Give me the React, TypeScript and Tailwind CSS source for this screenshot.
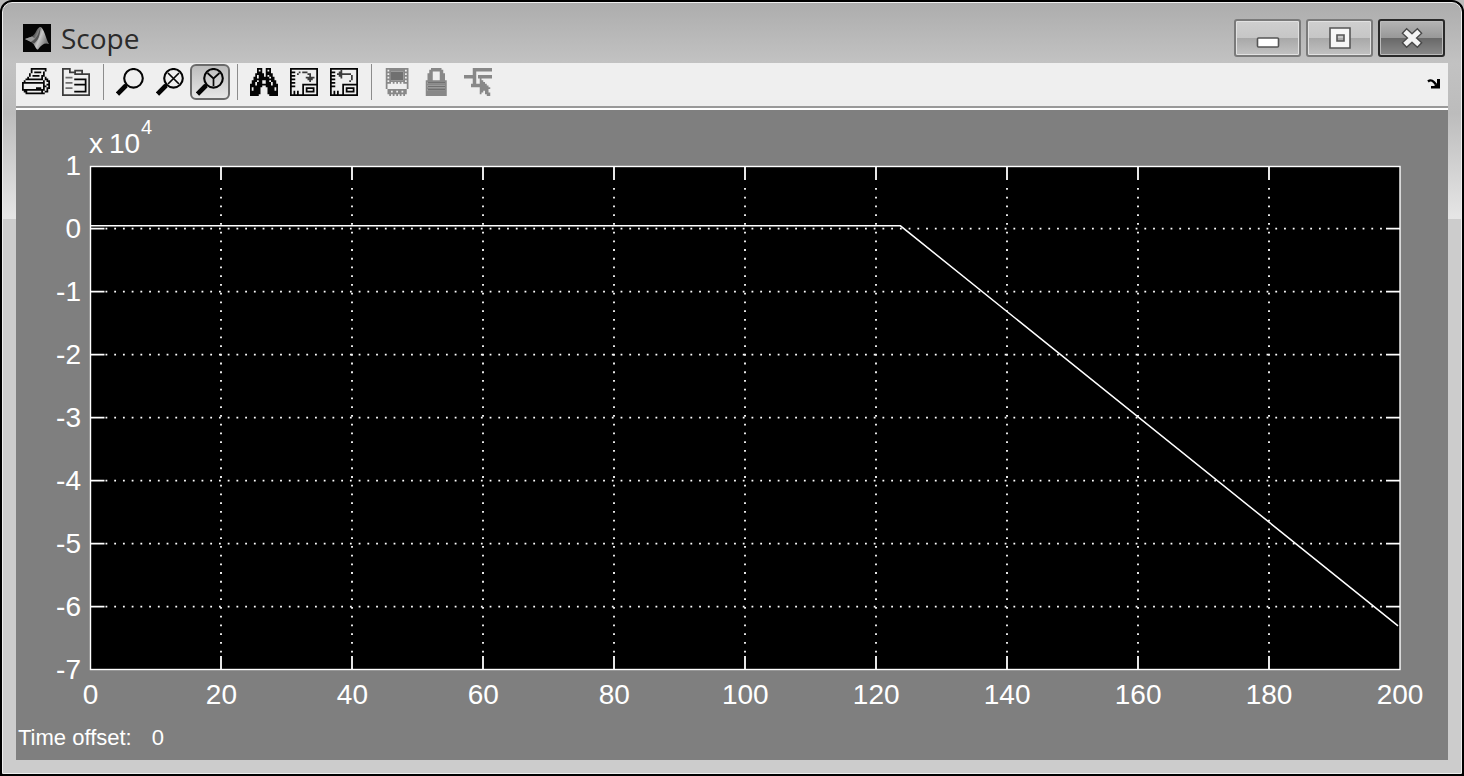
import React from "react";

type Bitmap = string[];

const PRINTER: Bitmap = [
  ".....#########..",
  ".....#.......#..",
  ".....#.####.#...",
  "....#.......#...",
  "....#.####.##...",
  "...#.......#.#..",
  "..##########.##.",
  ".#..........#.##",
  "#############..#",
  "#...........#.##",
  "#...........##.#",
  "#.......###.#.##",
  "#############.#.",
  ".##........#.##.",
  "..###########...",
  "................",
];

const PARAMETERS: Bitmap = [
  "=====...........",
  "=...=..=====....",
  "=...====...=....",
  "=......=========",
  "=..............=",
  "=.++++.........=",
  "=......#######.=",
  "=............#.=",
  "=.++++.......#.=",
  "=......#######.=",
  "=............#.=",
  "=.++++.......#.=",
  "=............#.=",
  "=......#######.=",
  "=..............=",
  "================",
];

const BINOCULARS: Bitmap = [
  "....###..###....",
  "....#.#..#.#....",
  "....###..###....",
  "...#####.####...",
  "...#.###.#.##...",
  "..##.######.##..",
  "..############..",
  ".###.##..##.###.",
  ".##.###..###.##.",
  "###.########.###",
  "#######..#######",
  "#.####....####.#",
  "#.####....####.#",
  "######....######",
  "######....######",
  "#####......#####",
];

const SAVE_AXES: Bitmap = [
  "################",
  "#..............#",
  "###..=.===.....#",
  "#...=.....==...#",
  "###........=...#",
  "#........=====.#",
  "###.......===..#",
  "#..........=...#",
  "###............#",
  "#......#########",
  "###....#.......#",
  "#......#.#####.#",
  "#......#.#...#.#",
  "#.#.#..#.#####.#",
  "#.#.#..#.......#",
  "################",
];

const RESTORE_AXES: Bitmap = [
  "################",
  "#.....=........#",
  "###..==........#",
  "#...========...#",
  "###..==.....=..#",
  "#.....=.....=..#",
  "###.........=..#",
  "#..........=...#",
  "###............#",
  "#......#########",
  "###....#.......#",
  "#......#.#####.#",
  "#......#.#...#.#",
  "#.#.#..#.#####.#",
  "#.#.#..#.......#",
  "################",
];

const FLOATING: Bitmap = [
  ".-------------..",
  ".-.---------.-..",
  ".---+++++++---..",
  ".-.-+++++++-.-..",
  ".---+++++++---..",
  ".-.-+++++++-.-..",
  ".---+++++++---..",
  ".-.---------.-..",
  ".---.-.-.-.---..",
  ".-...........-..",
  ".-...........-..",
  ".-...........-..",
  "..-----------...",
  "..--.--.--.--...",
  "..-----------...",
  "...-.-.-.-.-....",
];

const LOCK: Bitmap = [
  "....------......",
  "...--------.....",
  "...--....--.....",
  "..---....---....",
  "..---....---....",
  "..---....---....",
  "..---....---....",
  ".------------...",
  ".-++++++++++-...",
  ".------------...",
  ".-++++++++++-...",
  ".------------...",
  ".-++++++++++-...",
  ".------------...",
  ".------------...",
  ".------------...",
];

const SELECTOR: Bitmap = [
  ".....-----------",
  ".....-----------",
  ".....--.........",
  ".....--.........",
  "-------.--------",
  "-------.--------",
  ".....--..-......",
  ".....--..--.....",
  ".....--..---....",
  "....---------...",
  "....----------..",
  ".........------.",
  ".........-----..",
  ".........--.--..",
  ".........-..---.",
  ".............--.",
];

const INKS: Record<string, string> = {
  "#": "#050505",
  "=": "#3c3c3c",
  "+": "#707070",
  "-": "#888888",
};

function tracePath(rows: Bitmap, ink: string) {
  let d = "";
  rows.forEach((row, y) => {
    let x = 0;
    while (x < row.length) {
      if (row[x] !== ink) {
        x += 1;
        continue;
      }
      let run = 1;
      while (row[x + run] === ink) run += 1;
      d += `M${x} ${y}h${run}v1h-${run}z`;
      x += run;
    }
  });
  return d;
}

function PixelIcon({ rows }: { rows: Bitmap }) {
  return (
    <svg viewBox="0 0 16 16" className="size-7" aria-hidden="true">
      {Object.entries(INKS).map(([ink, fill]) => (
        <path key={ink} d={tracePath(rows, ink)} fill={fill} />
      ))}
    </svg>
  );
}

function Magnifier({ mark }: { mark?: string }) {
  return (
    <svg viewBox="0 0 28 28" className="size-7" fill="none" stroke="#050505" aria-hidden="true">
      <circle cx="17.5" cy="10.3" r="9.3" strokeWidth="2.1" />
      {mark && <path d={mark} strokeWidth="1.7" />}
      <path d="M11 16.5L8.5 19" strokeWidth="3" />
      <path d="M10 17.5L1.5 26" strokeWidth="4.6" />
    </svg>
  );
}

function ToolButton({
  label,
  pressed,
  disabled,
  children,
}: {
  label: string;
  pressed?: boolean;
  disabled?: boolean;
  children: React.ReactNode;
}) {
  return (
    <button
      type="button"
      aria-label={label}
      aria-pressed={pressed}
      disabled={disabled}
      className={
        pressed
          ? "flex h-9 w-10 shrink-0 items-center justify-center rounded-md border-2 border-[#6a6a6a] bg-linear-to-b from-[#bdbdbd] to-[#e6e6e6]"
          : "flex h-9 w-10 shrink-0 items-center justify-center"
      }
    >
      {children}
    </button>
  );
}

function Separator() {
  return (
    <div className="flex w-3.5 shrink-0 justify-center">
      <div className="h-9 w-px bg-[#8c8c8c]" />
    </div>
  );
}

function WindowButton({
  label,
  dark,
  children,
}: {
  label: string;
  dark?: boolean;
  children: React.ReactNode;
}) {
  return (
    <button
      type="button"
      aria-label={label}
      className={
        dark
          ? "flex h-[38px] w-[67px] items-center justify-center rounded-[3px] border-2 border-[#2a2a2a] bg-[linear-gradient(#b4b4b4,#989898_50%,#686868_50%,#8a8a8a)] shadow-[inset_0_0_0_1px_#bbb]"
          : "flex h-[38px] w-[67px] items-center justify-center rounded-[3px] border-2 border-[#7a7a7a] bg-[linear-gradient(#cfcfcf,#c6c6c6_50%,#a8a8a8_50%,#c2c2c2)] shadow-[inset_0_0_0_1px_#e2e2e2]"
      }
    >
      {children}
    </button>
  );
}

const PLOT = { left: 74.5, top: 56, right: 1384, bottom: 560 };
const X_TICKS = [0, 20, 40, 60, 80, 100, 120, 140, 160, 180, 200];
const Y_TICKS = [1, 0, -1, -2, -3, -4, -5, -6, -7];
const SERIES: [number, number][] = [
  [0, 0.05],
  [123.7, 0.05],
  [199.7, -6.3],
];
const TICK = 14;

const sx = (v: number) => PLOT.left + (v / 200) * (PLOT.right - PLOT.left);
const sy = (v: number) => PLOT.top + ((1 - v) / 8) * (PLOT.bottom - PLOT.top);

function Chart() {
  return (
    <svg
      viewBox="0 0 1432 608"
      className="block h-auto w-full font-['Liberation_Sans',Arial,sans-serif]"
      role="img"
      aria-label="Scope trace"
    >
      <rect
        x={PLOT.left}
        y={PLOT.top}
        width={PLOT.right - PLOT.left}
        height={PLOT.bottom - PLOT.top}
        fill="#000"
      />
      <g stroke="#fff" strokeWidth="1.8" fill="none">
        {X_TICKS.slice(1, -1).map((v) => {
          const x = Math.floor(sx(v));
          return (
            <g key={v}>
              <path d={`M${x} ${PLOT.top}v${TICK}M${x} ${PLOT.bottom}v${-TICK}`} />
              <path
                d={`M${x} ${PLOT.top + 22}V${PLOT.bottom - TICK}`}
                strokeDasharray="1.8 6.93"
              />
            </g>
          );
        })}
        {Y_TICKS.slice(1, -1).map((v) => {
          const y = sy(v) - 0.4;
          return (
            <g key={v}>
              <path d={`M${PLOT.left} ${y}h${TICK}M${PLOT.right} ${y}h${-TICK}`} />
              <path
                d={`M${PLOT.left + 15} ${y}H${PLOT.right - TICK}`}
                strokeDasharray="1.8 6.93"
              />
            </g>
          );
        })}
      </g>
      <rect
        x={PLOT.left}
        y={PLOT.top + 0.5}
        width={PLOT.right - PLOT.left}
        height={PLOT.bottom - PLOT.top - 1}
        fill="none"
        stroke="#fff"
        strokeWidth="1.4"
      />
      <polyline
        points={SERIES.map(([x, y]) => `${sx(x)},${sy(y)}`).join(" ")}
        fill="none"
        stroke="#fff"
        strokeWidth="1.5"
      />
      <g fill="#fff" fontSize="28">
        {X_TICKS.map((v) => (
          <text key={v} x={sx(v)} y="594" textAnchor="middle">
            {v}
          </text>
        ))}
        {Y_TICKS.map((v) => (
          <text key={v} x="65" y={sy(v) + 9} textAnchor="end">
            {v}
          </text>
        ))}
        <text x="73" y="43">
          x
        </text>
        <text x="93" y="43">
          10
        </text>
        <text x="125" y="24" fontSize="20">
          4
        </text>
      </g>
    </svg>
  );
}

export default function App() {
  return (
    <div className="min-h-screen bg-[#bbb]">
      <div className="rounded-t-xl border-2 border-black bg-black">
        <div className="rounded-t-[10px] border border-[#eee] bg-[linear-gradient(#adadad,#c2c2c2_60px,#bcbcbc_110px,#e6e6e6_216px,#cccccc_216px)] px-[13px] pb-[13px]">
          <header className="flex h-[60px] items-center justify-between pt-2.5 pr-[3px] pl-[7px]">
            <div className="flex items-center gap-2.5">
              <svg viewBox="0 0 28 28" className="size-7" aria-hidden="true">
                <defs>
                  <linearGradient id="peak" x1="0" x2="1" y1="0" y2="0.4">
                    <stop offset="0" stopColor="#8a8a8a" />
                    <stop offset="0.45" stopColor="#555" />
                    <stop offset="0.7" stopColor="#c8c8c8" />
                    <stop offset="1" stopColor="#777" />
                  </linearGradient>
                </defs>
                <rect width="28" height="28" fill="#060606" />
                <path
                  d="M2 15L9 12.5C13 10 14 3 17.5 3C21 4 23 15 26 20C22 18.5 19 20 15 25.5C13.5 26 12 22 10.5 20L8 18z"
                  fill="url(#peak)"
                />
                <path d="M2 15l7-2.500 3 2-4 3.500z" fill="#999" />
                <path d="M17.500 3c-2 6-3 11-9 15l2.500 1.500c4-3 6-7 6.500-16.500z" fill="#555" />
              </svg>
              <h1 className="font-['Open_Sans','Noto_Sans',sans-serif] text-[28px] leading-7 font-normal text-[#2b2b2b]">
                Scope
              </h1>
            </div>
            <div className="flex gap-[5px]">
              <WindowButton label="Minimize">
                <svg viewBox="0 0 24 24" className="size-6" aria-hidden="true">
                  <rect x="1.5" y="12" width="21" height="9" rx="1" fill="#fff" stroke="#555" strokeWidth="1.6" />
                </svg>
              </WindowButton>
              <WindowButton label="Maximize">
                <svg viewBox="0 0 24 24" className="size-6" aria-hidden="true">
                  <path
                    d="M2 2h20v20H2zM9 9v6h7V9z"
                    fill="#f6f6f6"
                    fillRule="evenodd"
                    stroke="#555"
                    strokeWidth="1.6"
                  />
                </svg>
              </WindowButton>
              <WindowButton label="Close" dark>
                <svg viewBox="0 0 24 24" className="size-6" fill="none" aria-hidden="true">
                  <path d="M4 4.500L20 19.500M20 4.500L4 19.500" stroke="#484848" strokeWidth="7.600" />
                  <path d="M5 5.500L19 18.500M19 5.500L5 18.500" stroke="#f4f4f4" strokeWidth="5" />
                </svg>
              </WindowButton>
            </div>
          </header>

          <div
            role="toolbar"
            aria-label="Scope tools"
            className="flex h-[45px] items-start border-b-2 border-[#999] bg-[#efefef] pt-px"
          >
            <ToolButton label="Print">
              <PixelIcon rows={PRINTER} />
            </ToolButton>
            <ToolButton label="Parameters">
              <PixelIcon rows={PARAMETERS} />
            </ToolButton>
            <Separator />
            <ToolButton label="Zoom">
              <Magnifier />
            </ToolButton>
            <ToolButton label="Zoom X-axis">
              <Magnifier mark="M12 5L23 16M23 5L12 16" />
            </ToolButton>
            <ToolButton label="Zoom Y-axis" pressed>
              <Magnifier mark="M11.5 5L17.5 10.5L23.5 5M17.5 10.5V18" />
            </ToolButton>
            <Separator />
            <ToolButton label="Autoscale">
              <PixelIcon rows={BINOCULARS} />
            </ToolButton>
            <ToolButton label="Save current axes settings">
              <PixelIcon rows={SAVE_AXES} />
            </ToolButton>
            <ToolButton label="Restore saved axes settings">
              <PixelIcon rows={RESTORE_AXES} />
            </ToolButton>
            <Separator />
            <ToolButton label="Floating scope" disabled>
              <PixelIcon rows={FLOATING} />
            </ToolButton>
            <ToolButton label="Lock axes selection" disabled>
              <PixelIcon rows={LOCK} />
            </ToolButton>
            <ToolButton label="Signal selection" disabled>
              <PixelIcon rows={SELECTOR} />
            </ToolButton>
            <button
              type="button"
              aria-label="Dock window"
              className="ml-auto flex h-10 w-7 items-center justify-center"
            >
              <svg viewBox="0 0 14 10" className="h-2.5 w-3.5" aria-hidden="true">
                <path d="M1 2.500C4 0 6.500 2 9 5.500" fill="none" stroke="#000" strokeWidth="2.400" />
                <path d="M13 0v9.500H4V7H7L10 4.500V0z" fill="#000" />
              </svg>
            </button>
          </div>

          <main className="border-t-2 border-white bg-[#7f7f7f]">
            <Chart />
            <div className="flex h-[42px] items-start gap-5 pt-1 pl-0.5 font-['Liberation_Sans',Arial,sans-serif] text-[22px] leading-8 text-white">
              <span id="time-offset">Time offset:</span>
              <output aria-labelledby="time-offset">0</output>
            </div>
          </main>
        </div>
      </div>
    </div>
  );
}
